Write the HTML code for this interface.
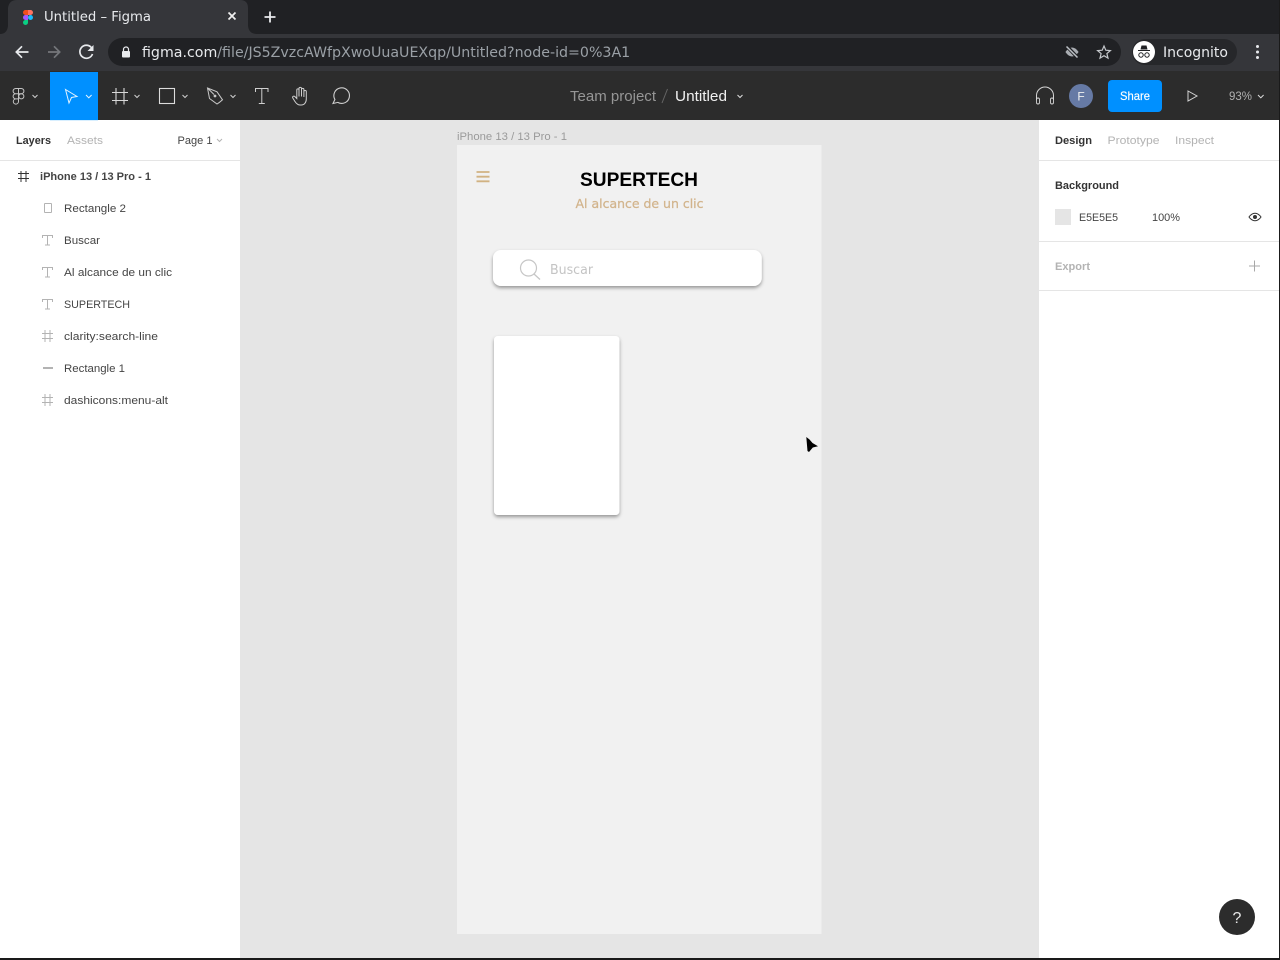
<!DOCTYPE html>
<html><head><meta charset="utf-8"><title>Untitled – Figma</title>
<style>
html,body{margin:0;padding:0;background:#fff}
body{width:1280px;height:960px;position:relative;overflow:hidden;font-family:"Liberation Sans",sans-serif}
svg{position:absolute;left:0;top:0}
text{white-space:pre}
.d{font-family:"DejaVu Sans",sans-serif}
.l{font-family:"Liberation Sans",sans-serif}
</style></head><body>
<svg width="1280" height="960" viewBox="0 0 1280 960" fill="none">
<!-- chrome -->
<rect width="1280" height="34" fill="#202124"/>
<rect y="34" width="1280" height="38" fill="#35363a"/>
<path d="M0 34 Q7 34 8 26 V8 Q9 0 17 0 H240 Q248 0 248 8 V26 Q249 34 257 34 H0Z" fill="#35363a"/>
<text x="44" y="21" class="d" font-size="13" fill="#e8eaed" textLength="107" lengthAdjust="spacingAndGlyphs">Untitled – Figma</text>
<g transform="translate(-1 2)">
<path d="M24 10.500a2.500 2.500 0 0 1 2.500-2.500H29v5h-2.500A2.500 2.500 0 0 1 24 10.500Z" fill="#f24e1e"/>
<path d="M29 8h2.500a2.500 2.500 0 0 1 0 5H29Z" fill="#ff7262"/>
<path d="M24 15.500a2.500 2.500 0 0 1 2.500-2.500H29v5h-2.500A2.500 2.500 0 0 1 24 15.500Z" fill="#a259ff"/>
<circle cx="31.500" cy="15.500" r="2.500" fill="#1abcfe"/>
<path d="M24 20.500a2.500 2.500 0 0 1 2.500-2.500H29v2.500a2.500 2.500 0 0 1-5 0Z" fill="#0acf83"/>
</g>
<path d="M228.500 12.500l7 7M235.500 12.500l-7 7" stroke="#f0f0f0" stroke-width="1.700"/>
<path d="M270 11.500v11M264.500 17h11" stroke="#e8eaed" stroke-width="1.800"/>
<path d="M28.500 52H16.500M22 46.300l-5.700 5.700 5.700 5.700" stroke="#e8eaed" stroke-width="1.700"/>
<path d="M48 52h11.500M54 46.300l5.700 5.700-5.700 5.700" stroke="#75777b" stroke-width="1.700"/>
<path d="M91.300 47.500A6.500 6.500 0 1 0 92.500 54" stroke="#e8eaed" stroke-width="1.700"/>
<path d="M87.500 51H93.500V45Z" fill="#e8eaed"/>
<rect x="108" y="38" width="1013" height="28" rx="14" fill="#202124"/>
<rect x="122" y="51" width="8" height="6.500" rx="1" fill="#e8eaed"/>
<path d="M123.500 51.500v-2a2.500 2.500 0 0 1 5 0v2" stroke="#e8eaed" stroke-width="1.200"/>
<text x="142" y="57" class="d" font-size="14.200"><tspan fill="#e8eaed">figma.com</tspan><tspan fill="#9aa0a6">/file/JS5ZvzcAWfpXwoUuaUEXqp/Untitled?node-id=0%3A1</tspan></text>
<path d="M1065.500 52s2.500-4.500 6.500-4.500 6.500 4.500 6.500 4.500-2.500 4.500-6.500 4.500-6.500-4.500-6.500-4.500Z" fill="#a9adb2"/>
<path d="M1066.500 46l11.500 12" stroke="#202124" stroke-width="3.500"/>
<path d="M1066.500 46.500l11 11" stroke="#bdc1c6" stroke-width="1.500"/>
<path d="M1104 46l1.800 4.200 4.600.4-3.500 3 1.100 4.500-4-2.400-4 2.400 1.100-4.500-3.500-3 4.600-.4Z" stroke="#c4c7cb" stroke-width="1.200"/>
<rect x="1132" y="39" width="105" height="26" rx="13" fill="#26272a"/>
<circle cx="1144" cy="52" r="11" fill="#fff"/>
<path d="M1138 50h12v1h-12ZM1140.500 49.500l1-4h5l1 4Z" fill="#202124"/>
<circle cx="1141" cy="55" r="2.200" stroke="#202124" stroke-width="1"/><circle cx="1147" cy="55" r="2.200" stroke="#202124" stroke-width="1"/>
<text x="1163" y="57" class="d" font-size="14.300" fill="#e8eaed" textLength="65" lengthAdjust="spacingAndGlyphs">Incognito</text>
<circle cx="1257.500" cy="46.500" r="1.500" fill="#e8eaed"/><circle cx="1257.500" cy="52" r="1.500" fill="#e8eaed"/><circle cx="1257.500" cy="57.500" r="1.500" fill="#e8eaed"/>
<!-- figma toolbar -->
<rect y="71" width="1280" height="49" fill="#2c2c2c"/>
<rect x="50" y="72" width="48" height="48" fill="#0090ff"/>
<g stroke="#c4c4c4" stroke-width="1">
<path d="M15.700 88.500h5.600a2.600 2.600 0 0 1 0 5.200h-5.600a2.600 2.600 0 0 1 0-5.200ZM18.500 88.500v10.500M15.700 93.700h2.800v5.200h-2.800a2.600 2.600 0 0 1 0-5.200ZM15.700 98.900h2.800v2.600a2.600 2.600 0 1 1-2.800-2.600Z"/>
<circle cx="21.300" cy="96.300" r="2.600"/>
</g>
<g stroke="#cfcfcf" stroke-width="1">
<path d="M32.500 95l2.500 2.500 2.500-2.500"/><path d="M134.500 95l2.500 2.500 2.500-2.500"/><path d="M182.500 95l2.500 2.500 2.500-2.500"/><path d="M230.500 95l2.500 2.500 2.500-2.500"/>
</g>
<path d="M86 95l2.800 2.800 2.800-2.800" stroke="#e8f5ff" stroke-width="1"/>
<path d="M65.500 89.500l11.500 7-5.500 1-2.500 5.500Z" stroke="#e3f3ff" stroke-width="1"/>
<path d="M112 92.500h16M112 100.500h16M116 88v16.500M124 88v16.500" stroke="#d8d8d8" stroke-width="1.100"/>
<rect x="159.500" y="88.500" width="15" height="15" stroke="#dcdcdc" stroke-width="1.100"/>
<path d="M207.500 88l9.500 3.800 5.500 8-3 2.500-2.500 1.700-7.500-5.500Z M207.500 88l6.500 6.500" stroke="#c8c8c8" stroke-width="1"/>
<circle cx="215" cy="96" r="1.400" fill="#c8c8c8"/>
<path d="M255.500 92v-3.500h12.500V92M261.800 88.500v15M258.800 103.500h6" stroke="#cfcfcf" stroke-width="1"/>
<path d="M298 104.500c-1.500-.7-2.500-2-3.200-3.200l-2-3.300c-.8-1.300.9-2.500 2-1.500l2 2V90c0-1.500 2.200-1.500 2.200 0v6.500-8c0-1.500 2.500-1.500 2.500 0v8-7c0-1.500 2.400-1.500 2.400 0v7.500-5.500c0-1.400 2.400-1.400 2.400 0V99c0 3.500-2 6-5 6-1.500 0-2.900-.1-3.300-.5Z" stroke="#cfcfcf" stroke-width="1"/>
<path d="M333 103.500l1.900-4a7.800 7.800 0 1 1 2.900 2.900Z" stroke="#cfcfcf" stroke-width="1.100"/>
<text x="570" y="101" class="l" font-size="14.500" fill="#969696" textLength="86" lengthAdjust="spacingAndGlyphs">Team project</text>
<path d="M662 103L667.500 89" stroke="#666" stroke-width="1"/>
<text x="675" y="101" class="l" font-size="14.500" fill="#f0f0f0" textLength="52" lengthAdjust="spacingAndGlyphs">Untitled</text>
<path d="M737.500 95l2.500 2.500 2.500-2.500" stroke="#ddd" stroke-width="1"/>
<path d="M1036.500 100v-4.500a8.500 8.500 0 0 1 17 0v4.500" stroke="#d4d4d4" stroke-width="1"/>
<rect x="1036.500" y="98" width="3" height="6" rx="1.500" stroke="#d4d4d4" stroke-width=".9"/><rect x="1050.500" y="98" width="3" height="6" rx="1.500" stroke="#d4d4d4" stroke-width=".9"/>
<circle cx="1081" cy="96" r="12" fill="#667aa5"/>
<text x="1081" y="100.500" class="l" font-size="12" fill="#f0f0f0" text-anchor="middle">F</text>
<rect x="1108" y="80" width="54" height="32" rx="4" fill="#0090ff"/>
<text x="1120" y="100" class="l" font-size="12" fill="#fff" stroke="#fff" stroke-width=".15" textLength="30" lengthAdjust="spacingAndGlyphs">Share</text>
<path d="M1188 91l9 5-9 5Z" stroke="#d4d4d4" stroke-width="1"/>
<text x="1229" y="100" class="l" font-size="11.500" fill="#b0b0b0" textLength="23" lengthAdjust="spacingAndGlyphs">93%</text>
<path d="M1258 95l2.800 2.800 2.800-2.800" stroke="#ddd" stroke-width="1"/>
<!-- canvas -->
<rect x="240" y="120" width="799" height="840" fill="#e5e5e5"/>
<rect x="457" y="145" width="364.500" height="789" fill="#f1f1f1"/>
<text x="457" y="140" class="l" font-size="11" fill="#9a9a9a" textLength="110" lengthAdjust="spacingAndGlyphs">iPhone 13 / 13 Pro - 1</text>
<path d="M476.500 172h13M476.500 176.700h13M476.500 181.300h13" stroke="#d1b282" stroke-width="1.800"/>
<text x="580" y="186" class="l" font-size="19.500" font-weight="700" fill="#000" textLength="118" lengthAdjust="spacingAndGlyphs">SUPERTECH</text>
<text x="575.500" y="208" class="d" font-size="12" fill="#d2b48c" stroke="#d2b48c" stroke-width=".25" textLength="128" lengthAdjust="spacingAndGlyphs">Al alcance de un clic</text>
<defs>
<filter id="s" x="-20%" y="-30%" width="140%" height="170%"><feDropShadow dx="0" dy="2" stdDeviation="1.800" flood-color="#000" flood-opacity=".38"/></filter>
</defs>
<rect x="493" y="250" width="268.700" height="36" rx="8" fill="#fff" filter="url(#s)"/>
<circle cx="528.500" cy="268" r="8" stroke="#c6c6c6" stroke-width="1.200"/>
<path d="M534 274l6 5.500" stroke="#c6c6c6" stroke-width="1.300"/>
<text x="550" y="274" class="d" font-size="13" fill="#c4c4c4" textLength="43" lengthAdjust="spacingAndGlyphs">Buscar</text>
<rect x="494" y="336" width="125.500" height="179" rx="4" fill="#fff" filter="url(#s)"/>
<path d="M806.300 437L809.500 439.500L812.500 443L818 446.300L812.800 447.500L809 452L807.500 451Z" fill="#000"/>
<!-- left panel -->
<rect y="120" width="240" height="840" fill="#fff"/>
<rect x="50" y="120" width="48" height="1" fill="#d8efff"/>
<rect y="160" width="240" height="1" fill="#e5e5e5"/>
<text x="16" y="144" class="l" font-size="11" font-weight="700" fill="#333" textLength="35" lengthAdjust="spacingAndGlyphs">Layers</text>
<text x="67" y="144" class="l" font-size="11" fill="#b3b3b3" textLength="36" lengthAdjust="spacingAndGlyphs">Assets</text>
<text x="177.500" y="144" class="l" font-size="11" fill="#444" textLength="35" lengthAdjust="spacingAndGlyphs">Page 1</text>
<path d="M217 139l2.500 2.500 2.500-2.500" stroke="#b3b3b3"/>
<path d="M18 173.500h11M18 178.500h11M21 171v11M26 171v11" stroke="#333" stroke-width="1"/>
<text x="40" y="180" class="l" font-size="11" font-weight="700" fill="#444" textLength="111" lengthAdjust="spacingAndGlyphs">iPhone 13 / 13 Pro - 1</text>
<rect x="44.500" y="203.500" width="7" height="9" rx=".5" stroke="#b3b3b3"/>
<text x="64" y="212" class="l" font-size="11" fill="#444" textLength="62" lengthAdjust="spacingAndGlyphs">Rectangle 2</text>
<g stroke="#b3b3b3"><path d="M42.500 238v-2.500h10V238M47.500 235.500v9.500M45 245h5"/><path d="M42.500 270v-2.500h10V270M47.500 267.500v9.500M45 277h5"/><path d="M42.500 302v-2.500h10V302M47.500 299.500v9.500M45 309h5"/></g>
<text x="64" y="244" class="l" font-size="11" fill="#444" textLength="36" lengthAdjust="spacingAndGlyphs">Buscar</text>
<text x="64" y="276" class="l" font-size="11" fill="#444" textLength="108" lengthAdjust="spacingAndGlyphs">Al alcance de un clic</text>
<text x="64" y="308" class="l" font-size="11" fill="#444" textLength="66" lengthAdjust="spacingAndGlyphs">SUPERTECH</text>
<g stroke="#b3b3b3"><path d="M42 333.500h11M42 338.500h11M45 330v12M50 330v12"/><path d="M42 397.500h11M42 402.500h11M45 394v12M50 394v12"/></g>
<text x="64" y="340" class="l" font-size="11" fill="#444" textLength="94" lengthAdjust="spacingAndGlyphs">clarity:search-line</text>
<path d="M43 368h10" stroke="#b3b3b3" stroke-width="2"/>
<text x="64" y="372" class="l" font-size="11" fill="#444" textLength="61" lengthAdjust="spacingAndGlyphs">Rectangle 1</text>
<text x="64" y="404" class="l" font-size="11" fill="#444" textLength="104" lengthAdjust="spacingAndGlyphs">dashicons:menu-alt</text>
<!-- right panel -->
<rect x="1039" y="120" width="241" height="840" fill="#fff"/>
<rect x="1039" y="160" width="241" height="1" fill="#e5e5e5"/>
<rect x="1039" y="241" width="241" height="1" fill="#e5e5e5"/>
<rect x="1039" y="290" width="241" height="1" fill="#e5e5e5"/>
<text x="1055" y="144" class="l" font-size="11" font-weight="700" fill="#333" textLength="37" lengthAdjust="spacingAndGlyphs">Design</text>
<text x="1107.500" y="144" class="l" font-size="11" fill="#b3b3b3" textLength="52" lengthAdjust="spacingAndGlyphs">Prototype</text>
<text x="1175" y="144" class="l" font-size="11" fill="#b3b3b3" textLength="39" lengthAdjust="spacingAndGlyphs">Inspect</text>
<text x="1055" y="189" class="l" font-size="11" font-weight="700" fill="#333" textLength="64" lengthAdjust="spacingAndGlyphs">Background</text>
<rect x="1055" y="209" width="16" height="16" fill="#e5e5e5"/>
<text x="1079" y="221" class="l" font-size="11" fill="#444" textLength="39" lengthAdjust="spacingAndGlyphs">E5E5E5</text>
<text x="1152" y="221" class="l" font-size="11" fill="#444" textLength="28" lengthAdjust="spacingAndGlyphs">100%</text>
<path d="M1249 217s2.400-3.700 6-3.700 6 3.700 6 3.700-2.400 3.700-6 3.700-6-3.700-6-3.700Z" stroke="#333"/>
<circle cx="1255" cy="217" r="2" fill="#333"/>
<text x="1055" y="270" class="l" font-size="11" font-weight="700" fill="#b3b3b3" textLength="35" lengthAdjust="spacingAndGlyphs">Export</text>
<path d="M1254.500 260.500v11M1249 266h11" stroke="#a8a8a8"/>
<circle cx="1237" cy="917" r="18" fill="#2c2c2c"/>
<text x="1237" y="923" class="l" font-size="16" fill="#e8e8e8" text-anchor="middle">?</text>
<rect y="958" width="1280" height="2" fill="#1a1a1a"/>
<rect x="1279" y="0" width="1" height="960" fill="#1a1a1a"/>
</svg>
</body></html>
